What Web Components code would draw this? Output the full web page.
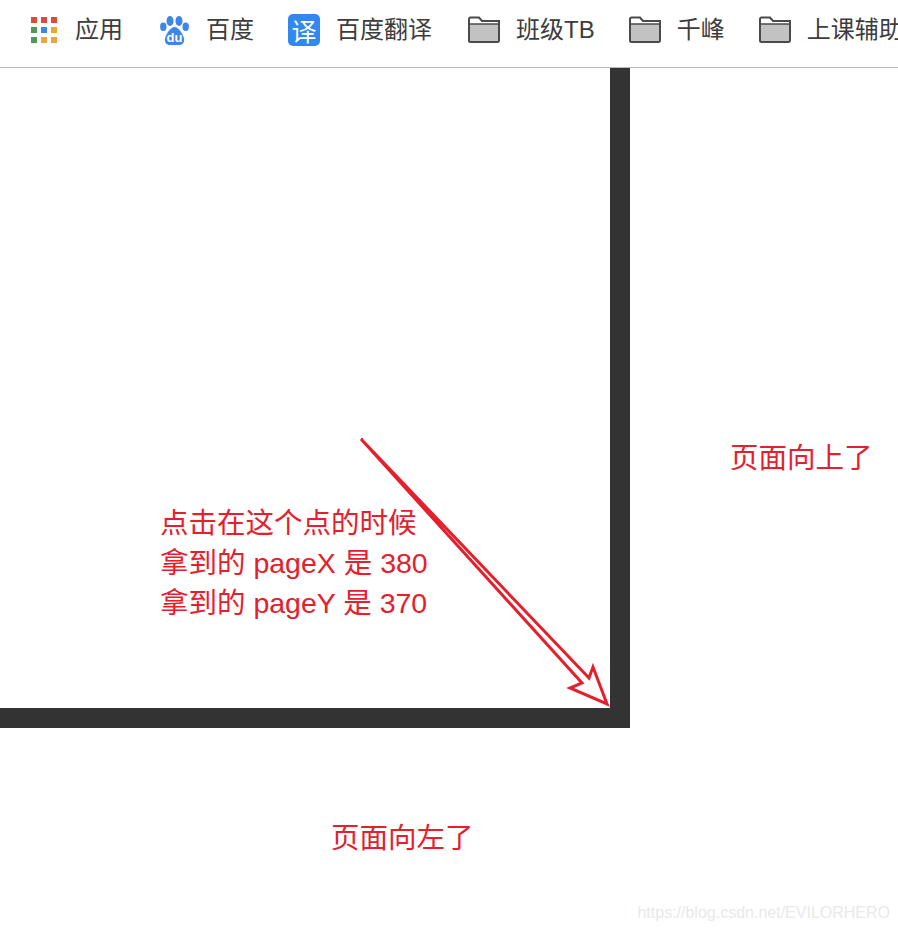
<!DOCTYPE html>
<html lang="zh">
<head>
<meta charset="utf-8">
<title>pageX pageY</title>
<style>
  html, body { margin: 0; background: #fff; }
  body { width: 898px; height: 932px; overflow: hidden; font-family: "Liberation Sans", "Noto Sans CJK SC", sans-serif; }
</style>
</head>
<body>
<demo-page>
  <bookmark-bar>
    <bookmark-item icon="apps" label="应用"></bookmark-item>
    <bookmark-item icon="baidu" label="百度"></bookmark-item>
    <bookmark-item icon="fanyi" label="百度翻译"></bookmark-item>
    <bookmark-item icon="folder" label="班级TB" style="margin-left: 2px"></bookmark-item>
    <bookmark-item icon="folder" label="千峰"></bookmark-item>
    <bookmark-item icon="folder" label="上课辅助"></bookmark-item>
  </bookmark-bar>
  <note-text x="160" y="503">点击在这个点的时候<br>拿到的 pageX 是 380<br>拿到的 pageY 是 370</note-text>
  <note-text x="730" y="438">页面向上了</note-text>
  <note-text x="331" y="818">页面向左了</note-text>
</demo-page>
<script>
const ICONS = {
  apps: `<svg width="27" height="26" viewBox="0 0 27 26">
    <rect x="0" y="0" width="6" height="6" fill="#dd4b3e"/><rect x="10" y="0" width="6" height="6" fill="#dd4b3e"/><rect x="20" y="0" width="6" height="6" fill="#dd4b3e"/>
    <rect x="0" y="10" width="6" height="6" fill="#4f9a5b"/><rect x="10" y="10" width="6" height="6" fill="#3b86e8"/><rect x="20" y="10" width="6" height="6" fill="#e9a63a"/>
    <rect x="0" y="20" width="6" height="6" fill="#4f9a5b"/><rect x="10" y="20" width="6" height="6" fill="#e9a63a"/><rect x="20" y="20" width="6" height="6" fill="#e9a63a"/>
  </svg>`,
  baidu: `<svg width="32" height="30" viewBox="0 0 32 30">
    <ellipse cx="6.300" cy="11.700" rx="3.200" ry="4.200" fill="#3b86e8"/>
    <ellipse cx="13" cy="6" rx="3.500" ry="5" fill="#3b86e8"/>
    <ellipse cx="22" cy="6" rx="3.500" ry="5" fill="#3b86e8"/>
    <ellipse cx="28.700" cy="11.700" rx="3.200" ry="4.200" fill="#3b86e8"/>
    <path d="M17.500 12C13.500 12 9 19 8 23.500c-.8 3.800 1.500 6.500 5 6.500h9c3.500 0 5.800-2.700 5-6.500C26 19 21.500 12 17.500 12z" fill="#3b86e8"/>
    <text x="17.500" y="27" text-anchor="middle" font-family="Liberation Sans, sans-serif" font-size="13" font-weight="700" fill="#fff">du</text>
  </svg>`,
  fanyi: `<span class="fanyi">译</span>`,
  folder: `<svg width="31" height="28" viewBox="0 0 31 28" style="overflow: visible">
    <rect x="1" y="8" width="30" height="18" fill="#c2c2c2"/>
    <path d="M1 3a1.500 1.500 0 0 1 1.500-1.500H11L14 5h17v19.500a1.500 1.500 0 0 1-1.500 1.500h-27A1.500 1.500 0 0 1 1 24.500z" fill="none" stroke="#4a4a4a" stroke-width="2"/>
    <path d="M1 8h30" stroke="#4a4a4a" stroke-width="1.500"/>
  </svg>`
}

class DemoPage extends HTMLElement {
  constructor() {
    super()
    this.attachShadow({mode: 'open'}).innerHTML = `
      <style>
        :host { display: block; position: relative; width: 898px; height: 932px; overflow: hidden; background: #fff; }
        .box { width: 610px; height: 640px; border-right: 20px solid #333; border-bottom: 20px solid #333; }
        .arrow { position: absolute; left: 0; top: 0; }
        .mark {
          position: absolute; right: 8px; top: 904px;
          font: 16px "Liberation Sans", sans-serif; color: #e9e9e9;
        }
      </style>
      <slot></slot>
      <div class="box"></div>
      <svg class="arrow" width="898" height="932">
        <path d="M361 439L589 678L593 667L607 704L570 688L582 683L361 439" fill="none" stroke="#e4202c" stroke-width="3"/>
      </svg>
      <div class="mark">https://blog.csdn.net/EVILORHERO</div>
    `
  }
}

class BookmarkBar extends HTMLElement {
  constructor() {
    super()
    this.attachShadow({mode: 'open'}).innerHTML = `
      <style>
        :host {
          display: flex; align-items: center; gap: 34px;
          height: 60px; padding: 0 0 7px 31px;
          border-bottom: 1px solid #bbb; overflow: hidden; white-space: nowrap;
        }
      </style>
      <slot></slot>
    `
  }
}

class BookmarkItem extends HTMLElement {
  connectedCallback() {
    const root = this.shadowRoot || this.attachShadow({mode: 'open'})
    root.innerHTML = `
      <style>
        :host { display: flex; align-items: center; gap: 17px; flex: none; }
        .icon { display: flex; align-items: center; }
        .label { font: 24px "Liberation Sans", "Noto Sans CJK SC", sans-serif; color: #3c3c3c; line-height: 32px; }
        .fanyi {
          display: block; width: 32px; height: 32px; margin-right: -1px; border-radius: 5px; background: #3388ee; color: #fff;
          font: 25px/32px "Noto Sans CJK SC", sans-serif; text-align: center;
        }
      </style>
      <span class="icon">${ICONS[this.getAttribute('icon')]}</span>
      <span class="label">${this.getAttribute('label')}</span>
    `
  }
}

class NoteText extends HTMLElement {
  connectedCallback() {
    const root = this.shadowRoot || this.attachShadow({mode: 'open'})
    root.innerHTML = `
      <style>
        :host {
          position: absolute; white-space: nowrap;
          left: ${this.getAttribute('x')}px; top: ${this.getAttribute('y')}px;
          font: 28.500px/40px "Liberation Sans", "Noto Sans CJK SC", sans-serif; color: #e4202c;
        }
      </style>
      <slot></slot>
    `
  }
}

customElements.define('demo-page', DemoPage)
customElements.define('bookmark-bar', BookmarkBar)
customElements.define('bookmark-item', BookmarkItem)
customElements.define('note-text', NoteText)
</script>
</body>
</html>
